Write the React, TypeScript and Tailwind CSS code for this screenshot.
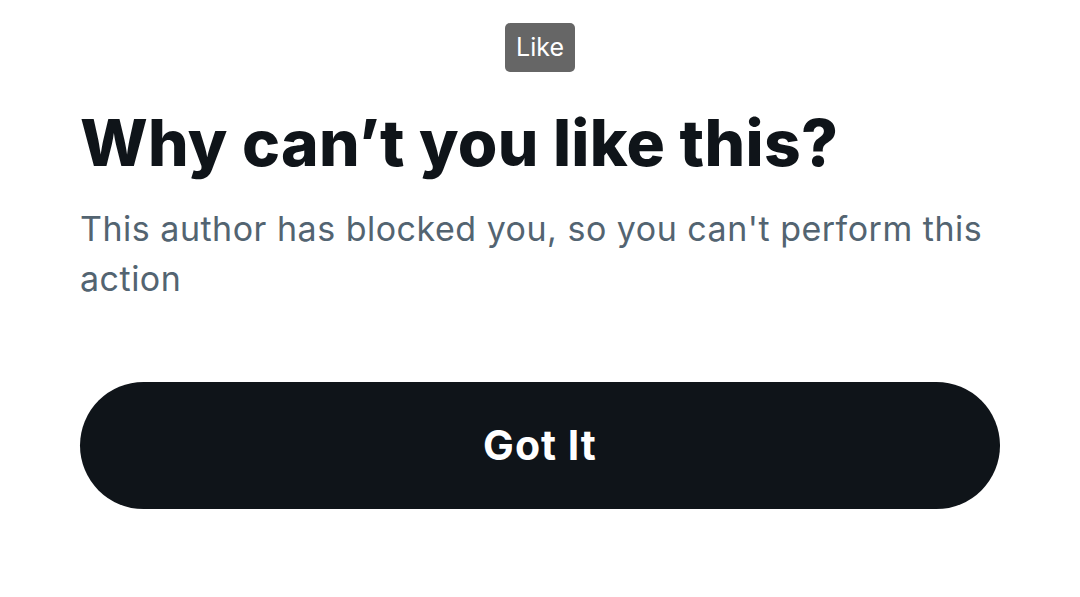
import React from 'react';

export default function App() {
  return (
    <div className="min-h-[597px] w-full bg-white font-['Inter','Noto_Sans',sans-serif]">
      {/* Tooltip */}
      <div className="flex justify-center pt-[23px]">
        <div className="rounded-[5px] bg-[#666666] px-[11px] h-[49px] flex items-center text-[25px] text-white leading-none">
          Like
        </div>
      </div>

      <div className="px-[80px] pt-[33px]">
        <h1 className="text-[64px] font-extrabold leading-[76px] tracking-[0.3px] text-[#0f1419]">
          Why can’t you like this?
        </h1>
        <p className="mt-[23px] text-[34px] leading-[50px] tracking-[0.5px] text-[#536471]">
          This author has blocked you, so you can't perform this action
        </p>

        <button className="mt-[78px] flex h-[127px] w-full items-center justify-center rounded-full bg-[#0f1419] text-[41px] font-bold tracking-[1px] text-white">
          Got It
        </button>
      </div>
    </div>
  );
}
